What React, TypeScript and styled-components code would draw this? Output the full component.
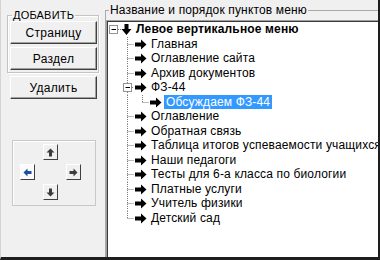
import styled, { createGlobalStyle } from "styled-components";

const GlobalStyle = createGlobalStyle`
  html, body { margin: 0; padding: 0; background: #f0f0f0; }
  body { font-family: "Liberation Sans", Arial, sans-serif; font-size: 12px; color: #000; }
`;

const ROW = 14.5;
const MID = 7.5;
const GUTTER = [12, 25, 40];
const LINE_X = [4.5, 18.5, 33.5];

type Item = {
  label: string;
  level: number;
  last?: boolean;
  expander?: boolean;
  bold?: boolean;
  selected?: boolean;
  parentLast?: boolean;
};

const items: Item[] = [
  { label: "Левое вертикальное меню", level: 0, expander: true, bold: true },
  { label: "Главная", level: 1 },
  { label: "Оглавление сайта", level: 1 },
  { label: "Архив документов", level: 1 },
  { label: "ФЗ-44", level: 1, expander: true },
  { label: "Обсуждаем ФЗ-44", level: 2, last: true, selected: true },
  { label: "Оглавление", level: 1 },
  { label: "Обратная связь", level: 1 },
  { label: "Таблица итогов успеваемости учащихся к", level: 1 },
  { label: "Наши педагоги", level: 1 },
  { label: "Тесты для 6-а класса по биологии", level: 1 },
  { label: "Платные услуги", level: 1 },
  { label: "Учитель физики", level: 1 },
  { label: "Детский сад", level: 1, last: true },
];

const dots = { stroke: "#7a7a7a", strokeWidth: 1, strokeDasharray: "1 1" };

function Guides({ item }: { item: Item }) {
  const w = GUTTER[item.level];
  const x = LINE_X[item.level];
  return (
    <Drawing width={w} height={ROW} viewBox={`0 0 ${w} ${ROW}`}>
      {item.level === 2 && !item.parentLast && (
        <line x1={LINE_X[1]} x2={LINE_X[1]} y1={0} y2={ROW} {...dots} />
      )}
      {item.level > 0 && (
        <line x1={x} x2={x} y1={0} y2={item.last ? MID : ROW} {...dots} />
      )}
      <line x1={item.expander ? x + 4.5 : x} x2={w} y1={MID} y2={MID} {...dots} />
      {item.expander && (
        <g>
          <rect x={x - 4} y={MID - 4} width={8} height={8} fill="#fff" stroke="#939393" />
          <line x1={x - 2} x2={x + 2.5} y1={MID} y2={MID} stroke="#000" />
        </g>
      )}
    </Drawing>
  );
}

function NodeIcon({ down }: { down?: boolean }) {
  if (down) {
    return (
      <Drawing width={11} height={ROW} viewBox={`0 0 11 ${ROW}`}>
        <path d="M3.5 2h4v5h3L5.5 13 .5 7h3z" fill="#000" />
      </Drawing>
    );
  }
  return (
    <Drawing width={13} height={ROW} viewBox={`0 0 13 ${ROW}`}>
      <path d="M1 5.5h6v-3l5.5 5L7 12.5v-3H1z" fill="#000" />
    </Drawing>
  );
}

function NudgeArrow({ angle, color }: { angle: number; color: string }) {
  return (
    <Drawing width={9} height={9} viewBox="0 0 9 9">
      <path
        d="M4.5 .5 8.5 4.5H6v4H3v-4H.5z"
        fill={color}
        transform={`rotate(${angle} 4.5 4.5)`}
      />
    </Drawing>
  );
}

export default function App() {
  return (
    <>
      <GlobalStyle />
      <Window>
        <LeftPane>
          <GroupBox>
            <GroupLegend>ДОБАВИТЬ</GroupLegend>
            <PushButton>Страницу</PushButton>
            <PushButton>Раздел</PushButton>
          </GroupBox>
          <DeleteButton>Удалить</DeleteButton>
          <NudgePanel>
            <NudgeButton $col={2} $row={1}>
              <NudgeArrow angle={0} color="#3c3c3c" />
            </NudgeButton>
            <NudgeButton $col={1} $row={2} $focused>
              <NudgeArrow angle={-90} color="#1d4f9e" />
            </NudgeButton>
            <NudgeButton $col={3} $row={2}>
              <NudgeArrow angle={90} color="#3c3c3c" />
            </NudgeButton>
            <NudgeButton $col={2} $row={3}>
              <NudgeArrow angle={180} color="#3c3c3c" />
            </NudgeButton>
          </NudgePanel>
        </LeftPane>
        <RightPane>
          <MenuGroup>
            <MenuLegend>Название и порядок пунктов меню</MenuLegend>
            <Tree>
              {items.map((item) => (
                <Row key={item.label}>
                  <Guides item={item} />
                  <NodeIcon down={item.level === 0} />
                  <Label $bold={item.bold} $selected={item.selected}>
                    {item.label}
                  </Label>
                </Row>
              ))}
            </Tree>
          </MenuGroup>
        </RightPane>
      </Window>
    </>
  );
}

const Drawing = styled.svg`
  flex: none;
  display: block;
`;

const Window = styled.div`
  width: 380px;
  height: 260px;
  box-sizing: border-box;
  display: flex;
  background: #f0f0f0;
  border-left: 1px solid #d4d4d4;
  border-right: 2px solid #1e1e1e;
  border-bottom: 3px solid #1e1e1e;
`;

const LeftPane = styled.div`
  width: 104px;
  flex: none;
  box-sizing: border-box;
  padding: 9px 0 0 6px;
  display: flex;
  flex-direction: column;
`;

const GroupBox = styled.fieldset`
  margin: 0;
  width: 92px;
  box-sizing: border-box;
  padding: 0 1px 2px 2px;
  border: 1px solid #c4c4c4;
  box-shadow: 1px 1px 0 #fff, inset 1px 1px 0 #fff;
  display: flex;
  flex-direction: column;
  gap: 3px;
`;

const GroupLegend = styled.legend`
  margin-left: 2px;
  padding: 0 1px;
  font-size: 11px;
  line-height: 12px;
  letter-spacing: 0.2px;
`;

const PushButton = styled.button`
  width: 87px;
  height: 23px;
  padding: 0;
  font: inherit;
  letter-spacing: 0.3px;
  color: #000;
  background: #f0f0f0;
  border: 1px solid;
  border-color: #fff #404040 #404040 #fff;
  box-shadow: inset -1px -1px 0 #a0a0a0;
`;

const DeleteButton = styled(PushButton)`
  margin: 3px 0 0 3px;
`;

const NudgePanel = styled.div`
  margin: 41px 0 0 5px;
  width: 84px;
  height: 66px;
  box-sizing: border-box;
  padding: 3px 0 0 7px;
  border: 1px solid #c8c8c8;
  box-shadow: inset 1px 1px 0 #fff;
  display: grid;
  grid-template-columns: repeat(3, 15px);
  grid-template-rows: repeat(3, 16px);
  gap: 4px 8px;
`;

const NudgeButton = styled.div<{ $col: number; $row: number; $focused?: boolean }>`
  grid-column: ${(p) => p.$col};
  grid-row: ${(p) => p.$row};
  display: flex;
  align-items: center;
  justify-content: center;
  background: ${(p) => (p.$focused ? "#fbfbfb" : "#f0f0f0")};
  border: 1px solid;
  border-color: #fff #404040 #404040 #fff;
`;

const RightPane = styled.div`
  flex: 1;
  min-width: 0;
  padding-top: 3px;
  display: flex;
`;

const MenuGroup = styled.fieldset`
  flex: 1;
  min-width: 0;
  margin: 0;
  padding: 0;
  border: 1px solid #a9a9a9;
  border-right: 0;
  border-bottom: 0;
  display: flex;
  flex-direction: column;
`;

const MenuLegend = styled.legend`
  margin-left: 3px;
  padding: 0 1px;
  line-height: 14px;
  letter-spacing: 0.15px;
`;

const Tree = styled.div`
  flex: 1;
  margin-top: 3px;
  background: #fff;
  border-top: 1px solid #a0a0a0;
  border-left: 1px solid #a0a0a0;
  box-shadow: inset 1px 1px 0 #3a3a3a;
  padding: 1px 0 0 2px;
  overflow: hidden;
`;

const Row = styled.div`
  display: flex;
  align-items: center;
  height: 14.5px;
  white-space: nowrap;
`;

const Label = styled.span<{ $bold?: boolean; $selected?: boolean }>`
  margin-left: 2px;
  padding: 0 2px;
  line-height: 14px;
  letter-spacing: 0.15px;
  font-weight: ${(p) => (p.$bold ? 700 : 400)};
  color: ${(p) => (p.$selected ? "#fff" : "#000")};
  background: ${(p) => (p.$selected ? "#3399ff" : "transparent")};
`;
